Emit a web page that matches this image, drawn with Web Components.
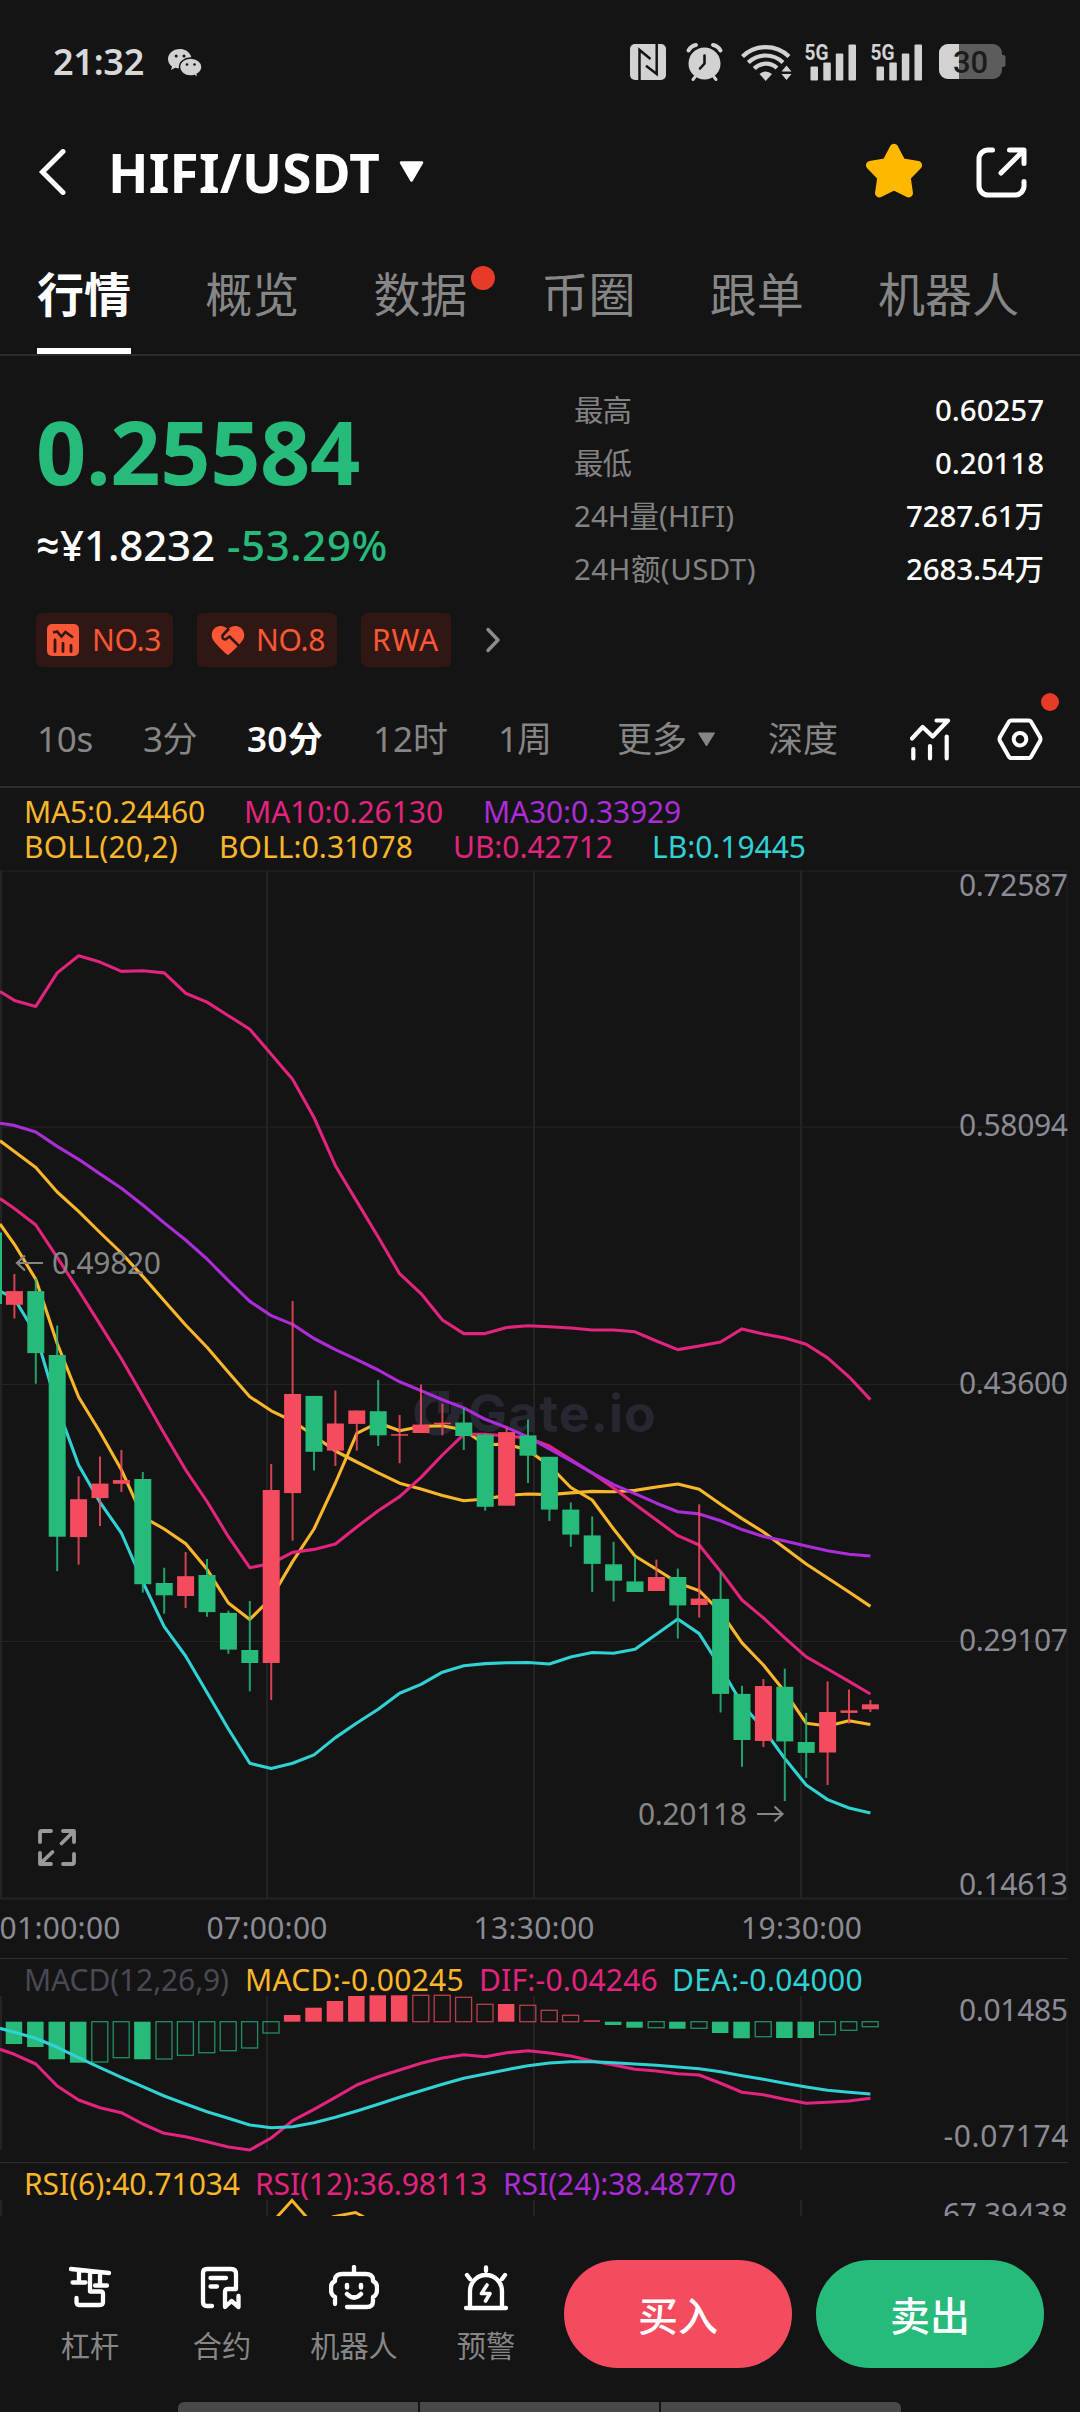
<!DOCTYPE html>
<html lang="zh-CN">
<head>
<meta charset="utf-8">
<title>HIFI/USDT</title>
<style>
  html, body { margin: 0; padding: 0; background: #141414; }
  body {
    width: 1080px;
    height: 2412px;
    overflow: hidden;
    display: flex;
    flex-direction: column;
    color: #fff;
    font-family: "Noto Sans", "Noto Sans CJK SC", sans-serif;
  }
</style>
</head>
<body>
  <status-bar></status-bar>
  <pair-header>HIFI/USDT</pair-header>
  <tab-bar>
    <tab-item active>行情</tab-item>
    <tab-item>概览</tab-item>
    <tab-item dot>数据</tab-item>
    <tab-item>币圈</tab-item>
    <tab-item>跟单</tab-item>
    <tab-item>机器人</tab-item>
  </tab-bar>
  <price-summary>
    <stat-row slot="stats" label="最高" label-width="58" value-width="110">0.60257</stat-row>
    <stat-row slot="stats" label="最低" label-width="58" value-width="110">0.20118</stat-row>
    <stat-row slot="stats" label="24H量(HIFI)" label-width="161" value-width="139">7287.61万</stat-row>
    <stat-row slot="stats" label="24H额(USDT)" label-width="183" value-width="139">2683.54万</stat-row>
  </price-summary>
  <interval-bar></interval-bar>
  <price-chart></price-chart>
  <macd-chart></macd-chart>
  <rsi-chart></rsi-chart>
  <action-bar></action-bar>

<script>
const GREEN = '#26ba7b';
const RED = '#f44b5f';
const YELLOW = '#fab62a';
const PINK = '#e2247f';
const PURPLE = '#ac2cd8';
const CYAN = '#30d2d4';

const GRID_X = [1, 267, 534, 801];
const RIGHT = 1067;
const STEP = 21.4;
const FIRST = 14.4;
const candleX = i => FIRST + i * STEP;

// Series start at the left screen edge, then one point per candle
function linePath(values) {
  return values
    .map((y, n) => `${n ? 'L' : 'M'}${n ? candleX(n - 1).toFixed(1) : 0} ${y}`)
    .join('');
}

function series(values, color) {
  return `<path d="${linePath(values)}" fill="none" stroke="${color}" stroke-width="3.100" stroke-linejoin="round"/>`;
}

// y is the middle of the capitals
function axisText(text, x, y, width, color = '#8b8b95') {
  return `<text x="${x}" y="${y + 10.8}" textLength="${width}" fill="${color}">${text}</text>`;
}

const SVG_CSS = `
  svg { display: block; overflow: visible; }
  text { font-size: 30px; }
`;

class StatusBar extends HTMLElement {
  connectedCallback() {
    this.attachShadow({ mode: 'open' }).innerHTML = `
      <style>
        :host { display: flex; align-items: center; height: 124px; box-sizing: border-box; padding: 0 75px 0 53px; flex: none; }
        svg { display: block; flex: none; overflow: visible; }
        .time { font-size: 36px; line-height: 40px; font-weight: 600; color: #d8d8d8; }
        .chat { margin: 2px auto 0 23px; }
        .nfc { margin-right: 20px; }
        .alarm { margin-right: 18px; }
        .wifi { margin-right: 14px; }
        .cell { margin-right: 13px; }
        .cell + .cell { margin-right: 15px; }
        text { font-family: "Roboto", sans-serif; }
      </style>
      <fit-text class="time" width="92">21:32</fit-text>
      <svg class="chat" width="35" height="29" viewBox="0 0 35 29" fill="#d2d2d2">
        <path d="M12 0C5 0 0 4.600 0 10c0 3.200 1.600 5.600 4 7.400L3 21l4.300-2.200c1.500.4 3 .7 4.700.6C23 19 25 11 22.500 6 20.500 2.200 16.500 0 12 0z"/>
        <path d="M22.500 9C16 9 11.500 13.200 11.500 18s4.500 9 11 9c1.400 0 2.600-.2 3.800-.6L30 28.500l-.8-3.300c2.600-1.600 4.800-4.200 4.800-7.200C34 13.200 29 9 22.500 9z" stroke="#141414" stroke-width="1.400"/>
        <g fill="#141414"><circle cx="8.200" cy="7" r="1.500"/><circle cx="16" cy="7" r="1.500"/><circle cx="19" cy="15.500" r="1.300"/><circle cx="26.500" cy="15.500" r="1.300"/></g>
      </svg>
      <svg class="nfc" width="36" height="36" viewBox="0 0 36 36">
        <rect width="36" height="36" rx="5" fill="#d2d2d2"/>
        <path d="M9.500 36V6L20.500 15M26.700 0V30L16 21.700" fill="none" stroke="#141414" stroke-width="2.500"/>
      </svg>
      <svg class="alarm" width="37" height="38" viewBox="0 0 37 38">
        <g fill="none" stroke="#d2d2d2" stroke-width="4" stroke-linecap="round">
          <path d="M2.500 7.500Q5 3 10 2M34.500 7.500Q32 3 27 2"/>
          <path d="M9 34L7 36.500M28 34L30 36.500" stroke-width="3"/>
        </g>
        <circle cx="18.500" cy="20.500" r="16" fill="#d2d2d2"/>
        <path d="M18.500 12.500V20.500L14 25.500" fill="none" stroke="#141414" stroke-width="2.600" stroke-linecap="round"/>
      </svg>
      <svg class="wifi" width="50" height="37" viewBox="0 0 50 37">
        <g fill="none" stroke="#d2d2d2" stroke-width="4.200">
          <path d="M1.500 12.500A33.500 33.500 0 0 1 48 12.500"/>
          <path d="M7.300 18.500A25 25 0 0 1 42 18.500"/>
          <path d="M13.200 24.500A16.500 16.500 0 0 1 36 24"/>
        </g>
        <path d="M24.700 37L18.500 30Q24.700 25 31 30z" fill="#d2d2d2"/>
        <path d="M40.500 27.500L45.500 21.500 50.500 27.500zM40.500 30L45.500 36 50.500 30z" fill="#d2d2d2"/>
      </svg>
      ${[0, 1].map(() => `
      <svg class="cell" width="53" height="38" viewBox="0 0 53 38" fill="#d2d2d2">
        <text x="-0.500" y="16.500" font-size="22" font-weight="700" textLength="24" lengthAdjust="spacingAndGlyphs">5G</text>
        <rect x="5.500" y="23.500" width="7.500" height="14" rx="1"/><rect x="18.300" y="19.500" width="7.500" height="18" rx="1"/>
        <rect x="30.800" y="10.500" width="7.500" height="27" rx="1"/><rect x="43.500" y="1.500" width="7.500" height="36" rx="1"/>
      </svg>`).join('')}
      <svg width="66" height="36" viewBox="0 0 66 36">
        <rect width="63" height="35" rx="9" fill="#5c5c5c"/>
        <path d="M63 11h1.500a2 2 0 0 1 2 2v8a2 2 0 0 1-2 2H63z" fill="#5c5c5c"/>
        <path d="M9 0H20V35H9A9 9 0 0 1 0 26V9A9 9 0 0 1 9 0z" fill="#d2d2d2"/>
        <text x="14" y="28.500" font-size="31" font-weight="500" textLength="35" fill="#1c1c1c">30</text>
      </svg>
    `;
  }
}

class PairHeader extends HTMLElement {
  connectedCallback() {
    this.attachShadow({ mode: 'open' }).innerHTML = `
      <style>
        :host { display: flex; align-items: center; height: 100px; padding: 0 53px 4px 38px; flex: none; box-sizing: border-box; }
        svg { display: block; flex: none; }
        .pair { margin: 1px 18px 0 41px; font-size: 53px; line-height: 60px; font-weight: 700; }
        .star { margin: -2px 53px 0 auto; }
      </style>
      <svg width="29" height="46" viewBox="0 0 29 46"><path d="M25 2.500L4.500 23 25 43.500" fill="none" stroke="#fff" stroke-width="5" stroke-linecap="round"/></svg>
      <fit-text class="pair" width="273"><slot></slot></fit-text>
      <svg width="25" height="22" viewBox="0 0 25 22"><path d="M2 1.500H23L12.500 19.500z" fill="#fff" stroke="#fff" stroke-width="2.500" stroke-linejoin="round"/></svg>
      <svg class="star" width="58" height="56" viewBox="0 0 58 56">
        <path d="M29 5 36.600 19.500 52.800 22.300 41.400 34 43.700 50.200 29 43 14.300 50.200 16.600 34 5.200 22.300 21.400 19.500z" fill="#ffb800" stroke="#ffb800" stroke-width="8.500" stroke-linejoin="round"/>
      </svg>
      <svg width="51" height="51" viewBox="0 0 51 51" fill="none" stroke="#fff" stroke-width="5" stroke-linecap="round" stroke-linejoin="round">
        <path d="M16.500 3H12A9 9 0 0 0 3 12V39A9 9 0 0 0 12 48H39A9 9 0 0 0 48 39V34.500"/>
        <path d="M33.500 3H48V16.500M47 4L25 26"/>
      </svg>
    `;
  }
}

class TabBar extends HTMLElement {
  connectedCallback() {
    this.attachShadow({ mode: 'open' }).innerHTML = `
      <style>
        :host {
          display: flex;
          justify-content: space-between;
          height: 132px;
          padding: 0 61px 0 37px;
          box-sizing: border-box;
          border-bottom: 2px solid #2b2b2b;
          flex: none;
        }
      </style>
      <slot></slot>
    `;
  }
}

class TabItem extends HTMLElement {
  connectedCallback() {
    const active = this.hasAttribute('active');
    this.attachShadow({ mode: 'open' }).innerHTML = `
      <style>
        :host {
          display: block;
          position: relative;
          padding-top: 38px;
          box-sizing: border-box;
          font-size: 47px;
          line-height: 60px;
          font-family: "Noto Sans CJK SC", sans-serif;
          color: ${active ? '#fff' : '#868686'};
          font-weight: ${active ? 700 : 400};
          ${active ? 'border-bottom: 6px solid #fff;' : ''}
        }
        i { position: absolute; left: 98px; top: 42px; width: 24px; height: 24px; border-radius: 50%; background: #e83a28; }
      </style>
      <slot></slot>${this.hasAttribute('dot') ? '<i></i>' : ''}
    `;
  }
}

class StatRow extends HTMLElement {
  connectedCallback() {
    this.attachShadow({ mode: 'open' }).innerHTML = `
      <style>
        :host { display: flex; justify-content: space-between; font-size: 29.500px; line-height: 53px; }
        .label { color: #828282; }
        .value { font-weight: 500; text-align: right; }
      </style>
      <fit-text class="label" width="${this.getAttribute('label-width')}">${this.getAttribute('label')}</fit-text>
      <fit-text class="value" width="${this.getAttribute('value-width')}"><slot></slot></fit-text>
    `;
  }
}

class TagChip extends HTMLElement {
  connectedCallback() {
    this.attachShadow({ mode: 'open' }).innerHTML = `
      <style>
        :host {
          display: flex;
          align-items: center;
          justify-content: space-between;
          height: 54px;
          padding: 0 11px;
          box-sizing: border-box;
          border-radius: 6px;
          background: #311713;
          color: #f95735;
          font-size: 30px;
          line-height: 54px;
        }
      </style>
      <slot name="icon"></slot>
      <fit-text width="${this.getAttribute('text-width')}"><slot></slot></fit-text>
    `;
  }
}

class PriceSummary extends HTMLElement {
  connectedCallback() {
    this.attachShadow({ mode: 'open' }).innerHTML = `
      <style>
        :host { display: grid; grid-template-columns: 536px 1fr; height: 324px; padding: 0 36px 0 36px; box-sizing: border-box; flex: none; }
        .left { padding-top: 51px; }
        .price { display: block; font-size: 88px; line-height: 88px; font-weight: 700; color: ${GREEN}; }
        .sub { display: flex; margin: 25px 0 43px; font-size: 42px; line-height: 50px; font-weight: 500; }
        .approx { font-family: "Roboto", sans-serif; }
        .change { color: ${GREEN}; margin-left: 11px; }
        .tags { display: flex; align-items: center; gap: 24px; }
        .tags svg { display: block; }
        .more { margin-left: 9px; }
        .stats { padding: 27px 0 0 2px; }
      </style>
      <div class="left">
        <fit-text class="price" width="325">0.25584</fit-text>
        <div class="sub">
          <fit-text class="approx" width="24">≈</fit-text>
          <fit-text class="fiat" width="156">¥1.8232</fit-text>
          <fit-text class="change" width="162">-53.29%</fit-text>
        </div>
        <div class="tags">
          <tag-chip text-width="70" style="width: 137px">
            <svg slot="icon" width="32" height="32" viewBox="0 0 32 32">
              <rect width="32" height="32" rx="5" fill="#f95735"/>
              <path d="M6 8.500L10 7.500 14.500 12.500 18.500 8 26 13.500" fill="none" stroke="#311713" stroke-width="2.600"/>
              <path d="M8 16V27.500M16 19.500V27.500M24 21.500V27.500" stroke="#311713" stroke-width="2.800" stroke-linecap="round"/>
            </svg>NO.3</tag-chip>
          <tag-chip text-width="70" style="width: 140px; padding-left: 14px">
            <svg slot="icon" width="34" height="31" viewBox="0 0 34 31">
              <path d="M17 30C15 29 3 18 1.200 13 -.5 7 3 1.500 9 1c4-.2 6 1.500 8 3 2-1.500 4-3.200 8-3 6 .5 9.500 6 7.800 12C31 18 19 29 17 30z" fill="#f95735"/>
              <path d="M18 3.500L11.500 10.500Q10.500 14 14.500 14.500L18.500 11.500 28 21" fill="none" stroke="#311713" stroke-width="2.600" stroke-linejoin="round"/>
            </svg>NO.8</tag-chip>
          <tag-chip text-width="68" style="width: 90px">RWA</tag-chip>
          <svg class="more" width="18" height="28" viewBox="0 0 18 28"><path d="M4 3.500L14 14 4 24.500" fill="none" stroke="#8c8c8c" stroke-width="3.500" stroke-linecap="round" stroke-linejoin="round"/></svg>
        </div>
      </div>
      <div class="stats"><slot name="stats"></slot></div>
    `;
  }
}

class IntervalBar extends HTMLElement {
  connectedCallback() {
    this.attachShadow({ mode: 'open' }).innerHTML = `
      <style>
        :host {
          display: flex;
          align-items: center;
          gap: 49px;
          height: 108px;
          padding: 12px 37px 0 37px;
          box-sizing: border-box;
          border-bottom: 2px solid #2e2e2e;
          font-size: 35px;
          line-height: 48px;
          color: #868686;
          flex: none;
        }
        svg { display: block; }
        .active { color: #fff; font-weight: 600; }
        .more { display: flex; align-items: center; gap: 9px; margin-left: 16px; }
        .depth { margin-left: 3px; }
        .tools { display: flex; gap: 46px; margin-left: auto; position: relative; }
        .tools i { position: absolute; right: -16px; top: -25px; width: 18px; height: 18px; border-radius: 50%; background: #e83a28; }
      </style>
      <fit-text width="57">10s</fit-text>
      <fit-text width="55">3分</fit-text>
      <fit-text class="active" width="77">30分</fit-text>
      <fit-text width="76">12时</fit-text>
      <fit-text width="54">1周</fit-text>
      <div class="more">
        <fit-text width="71">更多</fit-text>
        <svg width="19" height="15" viewBox="0 0 19 15"><path d="M1.500 1H17.500L9.500 14z" fill="#868686" stroke="#868686" stroke-linejoin="round"/></svg>
      </div>
      <fit-text class="depth" width="71">深度</fit-text>
      <div class="tools">
        <svg width="41" height="43" viewBox="0 0 41 43" fill="none" stroke="#fff" stroke-width="4.200" stroke-linecap="round" stroke-linejoin="round">
          <path d="M2 20.500L12.700 9 22.700 18.500 38 2.500H26.500"/>
          <path d="M3.300 31V40.500M20 28V40.500M36.700 18.500V40.500"/>
        </svg>
        <svg width="46" height="43" viewBox="0 0 46 43" fill="none" stroke="#fff" stroke-width="4">
          <path d="M14.500 2.500H31.500Q33.500 2.500 34.500 4.500L43 19Q44 21 43 23L34.500 38Q33.500 40 31.500 40H14.500Q12.500 40 11.500 38L3 23Q2 21 3 19L11.500 4.500Q12.500 2.500 14.500 2.500z"/>
          <circle cx="23" cy="21.200" r="6.300"/>
        </svg>
        <i></i>
      </div>
    `;
  }
}

// A row of indicator values: "text|width|color|gap before"
class LegendRow extends HTMLElement {
  connectedCallback() {
    this.attachShadow({ mode: 'open' }).innerHTML = `
      <style>
        :host { display: flex; padding-left: 24px; font-size: 30px; line-height: 34px; white-space: nowrap; }
      </style>
      ${this.getAttribute('items').split(';').map(item => {
        const [text, width, color, gap] = item.split('|');
        return `<fit-text width="${width}" style="color: ${color}; margin-left: ${gap || 0}px">${text}</fit-text>`;
      }).join('')}
    `;
  }
}

// [up, high, top, bottom, low]
const CANDLES = [
  [1, 1273.9, 1291.1, 1304.8, 1318.6], [0, 1278.4, 1291.1, 1353.1, 1383.7], [0, 1325.5, 1355, 1536.7, 1571.2],
  [1, 1476.3, 1499.2, 1537.1, 1564.7], [1, 1456.4, 1483.6, 1498.1, 1526], [1, 1449.9, 1480.1, 1483.8, 1492],
  [0, 1472, 1479, 1584.2, 1592.6], [0, 1567.7, 1583, 1595.3, 1613.7], [1, 1552, 1576.2, 1596, 1607.9],
  [0, 1558.9, 1575, 1612.1, 1616.7], [0, 1610.6, 1612.9, 1649.6, 1653.8], [0, 1601, 1650, 1663, 1691.3],
  [1, 1464, 1490, 1663, 1700], [1, 1301, 1394, 1493.1, 1540.6], [0, 1395.9, 1395.9, 1451.8, 1470.5],
  [1, 1390.6, 1423.5, 1450.6, 1466], [1, 1410.5, 1410.5, 1423.9, 1450.6], [0, 1379.9, 1411.2, 1435.3, 1446],
  [1, 1415, 1434.2, 1435.7, 1463.3], [1, 1384.4, 1424.6, 1433, 1433], [1, 1403.6, 1422.7, 1424.2, 1435.3],
  [0, 1407.9, 1422.5, 1436, 1450], [0, 1433.6, 1434.6, 1506.8, 1510.7], [1, 1427.5, 1432.1, 1505.7, 1505.7],
  [0, 1419.6, 1435.4, 1455.7, 1482.9], [0, 1456.8, 1456.8, 1509.6, 1521], [0, 1502.5, 1509.6, 1534.6, 1546.8],
  [0, 1516.4, 1535.4, 1563.9, 1592], [0, 1541.8, 1564.3, 1580.7, 1601.4], [0, 1556.8, 1581.4, 1592, 1592],
  [1, 1559.6, 1577, 1591, 1591], [0, 1568.6, 1577, 1605.4, 1638.6], [1, 1504.3, 1598.6, 1605, 1617.5],
  [0, 1572, 1598.9, 1693.9, 1712.5], [0, 1685.7, 1693.9, 1740, 1766.8], [1, 1679, 1686, 1741, 1747],
  [0, 1668.6, 1686.8, 1741.4, 1801], [0, 1712.9, 1742, 1752.9, 1777.9], [1, 1681.4, 1712, 1752.5, 1785],
  [1, 1689.6, 1710.4, 1712.9, 1723.6], [1, 1700, 1704.3, 1709.3, 1712]
];

const UB = [991.5, 1000.4, 1006.4, 972.9, 955.7, 962.1, 971.4, 970.7, 972.9, 993.2, 1002.1, 1015.7, 1029.3, 1054.3,
  1079.3, 1117.5, 1165.7, 1201.4, 1237, 1273.6, 1293.6, 1320, 1333.6, 1333.6, 1327.5, 1325.7, 1326.8, 1328, 1330, 1330,
  1331.8, 1341, 1349.6, 1346, 1342, 1328.9, 1333.9, 1338, 1344.3, 1357.9, 1376.8, 1399.6];
const MA30 = [1123.2, 1125.4, 1132, 1146.4, 1159.3, 1173.9, 1188.2, 1205, 1222.9, 1240, 1259, 1280.7, 1301.4, 1315.6,
  1324.4, 1338.5, 1349.6, 1359.6, 1370, 1381.8, 1390.6, 1399.7, 1407.9, 1419.3, 1427.5, 1437, 1449, 1460.7, 1472.9,
  1484.6, 1493.6, 1503.2, 1511.8, 1513.9, 1520.7, 1529.6, 1536.4, 1541, 1546, 1550.7, 1554.3, 1556];
const BOLL = [1140.7, 1151.4, 1167.5, 1192, 1211.4, 1232.5, 1253, 1276.4, 1300.7, 1325, 1347.3, 1372.2, 1396.7, 1410.8,
  1421, 1435.7, 1451, 1462, 1472.8, 1483.2, 1489, 1495.4, 1500.7, 1499, 1495.4, 1494, 1494.6, 1492.9, 1491.4, 1491.8,
  1490.4, 1487, 1484, 1489.3, 1504.3, 1518.6, 1532, 1548, 1564, 1578, 1592, 1606.4];
const MA10 = [1198.6, 1208.6, 1225, 1257.4, 1290.3, 1324.4, 1358.8, 1396, 1433.4, 1469.8, 1501.5, 1536.7, 1567.7, 1563.5,
  1552.4, 1549.4, 1544, 1527, 1510.7, 1496.6, 1477.4, 1455, 1434.3, 1434.3, 1436, 1438, 1446, 1459.6, 1473, 1488,
  1504.3, 1520, 1535.7, 1545, 1571.4, 1600, 1617.9, 1637.9, 1656.8, 1669, 1681.4, 1694];
const MA5 = [1224, 1244.3, 1279.3, 1343.5, 1397, 1432, 1469.8, 1516.8, 1529, 1543.6, 1569.3, 1603, 1619.4, 1598, 1561.6,
  1529, 1483, 1433.4, 1422.7, 1430.7, 1426.5, 1425.8, 1430, 1444.6, 1444.3, 1450, 1465.7, 1487.5, 1500, 1529, 1556,
  1569.3, 1582.9, 1590.7, 1612, 1642.9, 1665, 1691.8, 1723.2, 1726, 1720.7, 1724.6];
const LB = [1291, 1298.7, 1334, 1406.6, 1465, 1502.3, 1533, 1582, 1626.7, 1656, 1692.5, 1729, 1763.3, 1768.6, 1763.3,
  1754.9, 1737.6, 1723, 1709.3, 1693.2, 1684.4, 1672.2, 1665.7, 1663.6, 1662.8, 1662.5, 1664, 1657, 1652.5, 1653.2,
  1649.3, 1634.3, 1619, 1633.6, 1667.5, 1704, 1729, 1758.6, 1785, 1799.6, 1808, 1813];

class PriceChart extends HTMLElement {
  connectedCallback() {
    this.attachShadow({ mode: 'open' }).innerHTML = `
      <style>
        ${SVG_CSS}
        :host { display: block; flex: none; height: 1170px; }
        .legend { height: 82px; padding-top: 7px; box-sizing: border-box; }
        legend-row + legend-row { margin-top: 1px; }
        .mark { font-family: "Inter", sans-serif; font-size: 52px; font-weight: 700; }
      </style>
      <div class="legend">
        <legend-row items="MA5:0.24460|182|${YELLOW};MA10:0.26130|200|${PINK}|38;MA30:0.33929|199|${PURPLE}|39"></legend-row>
        <legend-row items="BOLL(20,2)|155|${YELLOW};BOLL:0.31078|195|${YELLOW}|40;UB:0.42712|161|${PINK}|39;LB:0.19445|155|${CYAN}|38"></legend-row>
      </div>
      <svg width="1080" height="1088" viewBox="0 870 1080 1088">
        ${this.renderGrid()}
        <g fill="#272731">
          <path d="M437 1396A17 17 0 1 0 454 1414" fill="none" stroke="#272731" stroke-width="11"/>
          <rect x="438" y="1391" width="11" height="22"/><rect x="451" y="1402" width="12" height="12"/>
          <text class="mark" x="468" y="1432" textLength="188">Gate.io</text>
        </g>
        ${series(UB, PINK)}
        ${series(LB, CYAN)}
        ${series(BOLL, YELLOW)}
        ${series(MA5, YELLOW)}
        ${series(MA10, PINK)}
        ${series(MA30, PURPLE)}
        <rect x="0" y="1232.500" width="2" height="71.500" fill="${GREEN}"/>
        ${CANDLES.map((c, i) => this.renderCandle(c, i)).join('')}
        ${axisText('0.72587', 959, 885.2, 109)}
        ${axisText('0.58094', 959, 1125.4, 109)}
        ${axisText('0.43600', 959, 1383, 109)}
        ${axisText('0.29107', 959, 1640.5, 109)}
        ${axisText('0.14613', 959, 1884, 109)}
        ${axisText('01:00:00', -0.5, 1928, 121)}
        ${axisText('07:00:00', 206.5, 1928, 121)}
        ${axisText('13:30:00', 473.5, 1928, 121)}
        ${axisText('19:30:00', 741, 1928, 121)}
        ${axisText('0.49820', 52, 1263, 109, '#868686')}
        ${axisText('0.20118', 638, 1814, 109, '#868686')}
        <g fill="none" stroke="#868686" stroke-width="2.200">
          <path d="M43 1263H17.500M25 1255.500L17 1263L25 1270.500"/>
          <path d="M757 1814H782M774.500 1806.500L782.500 1814L774.500 1821.500"/>
        </g>
        <g fill="none" stroke="#999" stroke-width="3.800" stroke-linecap="round" stroke-linejoin="round">
          <path d="M51 1831H42Q40 1831 40 1833V1842M63 1831H74V1842M73 1832L61.500 1843.500"/>
          <path d="M74 1854V1862Q74 1864 72 1864H63M40 1853V1864H51M41 1863L52.500 1852"/>
        </g>
      </svg>
    `;
  }

  renderGrid() {
    const h = [871, 1127, 1384.5, 1641.5].map(y => `<path d="M0 ${y}H${RIGHT}" stroke="#242424"/>`).join('');
    const v = GRID_X.map(x => `<path d="M${x} 870V1898" stroke="#232323" stroke-width="2"/>`).join('');
    return `${h}${v}<path d="M${RIGHT} 870V1898" stroke="#212121"/>
      <path d="M0 1898.500H${RIGHT}" stroke="#242424" stroke-width="2"/>`;
  }

  renderCandle([up, high, top, bottom, low], i) {
    const x = candleX(i);
    const color = up ? RED : GREEN;
    return `<path d="M${x} ${high}V${low}" stroke="${color}" stroke-width="2" opacity="0.85"/>
      <rect x="${x - 8.5}" y="${top}" width="17" height="${Math.max(1.5, bottom - top)}" fill="${color}"/>`;
  }
}

// [end of bar, hollow]
const ZERO = 2021.7;
const BARS = [
  [2044, 0], [2047, 0], [2059.3, 0], [2062.7, 0], [2062, 1], [2057.7, 1], [2059.3, 0], [2059, 1], [2055.3, 1],
  [2052.7, 1], [2050.7, 1], [2048, 1], [2033, 1], [2015, 0], [2007.7, 0], [2001, 0], [1996, 0], [1995.3, 0],
  [1995.3, 0], [1995.3, 1], [1995.3, 1], [1997.3, 1], [2004.3, 1], [2004, 0], [2005.3, 1], [2010.3, 1],
  [2015.3, 1], [2020.4, 0], [2025, 0], [2027.7, 0], [2027.7, 1], [2028.7, 0], [2028.3, 1], [2033, 0], [2038.3, 0],
  [2036.7, 1], [2038, 0], [2038, 0], [2034.7, 1], [2030.3, 1], [2026.7, 1]
];
const DIF = [2049.3, 2054.3, 2064, 2086, 2100, 2107.7, 2112.7, 2124, 2133.3, 2136.7, 2141.7, 2147, 2150, 2138, 2120.7,
  2109.3, 2097.3, 2085, 2076.7, 2070, 2063.3, 2058, 2054.7, 2056.7, 2052.7, 2050.7, 2053, 2056, 2061, 2065, 2069.3,
  2071, 2073.7, 2075, 2083.3, 2092.3, 2094.7, 2099.3, 2103.3, 2102.3, 2101, 2098.3];
const DEA = [2028.3, 2032.3, 2038.3, 2047.3, 2057.7, 2067.7, 2077.3, 2086.7, 2096, 2104, 2111.7, 2118.3, 2125, 2127.7,
  2126.7, 2122.7, 2117.3, 2111, 2104.3, 2097.3, 2090.7, 2084.3, 2078.3, 2074, 2069.7, 2065.7, 2063, 2061.7, 2061.7,
  2062.7, 2064, 2065.3, 2067, 2068.7, 2071.7, 2075.7, 2079.3, 2083.3, 2087, 2090.3, 2092.3, 2094];

class MacdChart extends HTMLElement {
  connectedCallback() {
    this.attachShadow({ mode: 'open' }).innerHTML = `
      <style>
        ${SVG_CSS}
        :host { display: block; flex: none; width: 1068px; height: 204px; box-sizing: border-box; border-top: 1px solid #303030; }
        .legend { padding-top: 4px; height: 36px; box-sizing: border-box; }
      </style>
      <div class="legend">
        <legend-row items="MACD(12,26,9)|206|#494953;MACD:-0.00245|220|${YELLOW}|15;DIF:-0.04246|180|${PINK}|14;DEA:-0.04000|192|${CYAN}|13"></legend-row>
      </div>
      <svg width="1068" height="167" viewBox="0 1995 1068 167">
        ${GRID_X.map(x => `<path d="M${x} 1996V2150" stroke="#232323" stroke-width="2"/>`).join('')}
        <path d="M${RIGHT} 1996V2150" stroke="#212121"/>
        ${BARS.map((b, i) => this.renderBar(b, i)).join('')}
        ${series(DIF, PINK)}
        ${series(DEA, CYAN)}
        ${axisText('0.01485', 959, 2010.5, 109)}
        ${axisText('-0.07174', 943.5, 2136, 125)}
      </svg>
    `;
  }

  renderBar([end, hollow], i) {
    const x = candleX(i) - 8.7;
    const color = end > ZERO ? GREEN : RED;
    const top = Math.min(end, ZERO);
    const height = Math.abs(end - ZERO);
    return hollow
      ? `<rect x="${x + 0.5}" y="${top}" width="16" height="${height}" fill="none" stroke="${color}" stroke-width="1.300" opacity="0.75"/>`
      : `<rect x="${x}" y="${top}" width="16.500" height="${height}" fill="${color}"/>`;
  }
}

class RsiChart extends HTMLElement {
  connectedCallback() {
    this.attachShadow({ mode: 'open' }).innerHTML = `
      <style>
        ${SVG_CSS}
        :host { display: block; flex: none; width: 1068px; height: 54px; box-sizing: border-box; border-top: 1px solid #303030; overflow: hidden; }
        .legend { padding-top: 4px; height: 37px; box-sizing: border-box; }
      </style>
      <div class="legend">
        <legend-row items="RSI(6):40.71034|217|${YELLOW};RSI(12):36.98113|233|${PINK}|14;RSI(24):38.48770|234|${PURPLE}|15"></legend-row>
      </div>
      <svg width="1068" height="16" viewBox="0 2200 1068 16">
        ${GRID_X.map(x => `<path d="M${x} 2200V2216" stroke="#232323" stroke-width="2"/>`).join('')}
        <path d="M277 2217L292 2200.500L306.500 2217M332 2217L355.500 2212.500L364 2217" fill="none" stroke="${YELLOW}" stroke-width="2.900"/>
        ${axisText('67.39438', 943, 2214, 125)}
      </svg>
    `;
  }
}

class NavItem extends HTMLElement {
  connectedCallback() {
    this.attachShadow({ mode: 'open' }).innerHTML = `
      <style>
        :host {
          display: flex;
          flex-direction: column;
          align-items: center;
          justify-content: space-between;
          width: 132px;
          height: 99px;
          font-family: "Noto Sans CJK SC", sans-serif;
          font-size: 29.200px;
          line-height: 40px;
          color: #868686;
        }
        svg { display: block; fill: none; stroke: #fff; stroke-width: 4.300; stroke-linecap: round; stroke-linejoin: round; }
      </style>
      <svg width="50" height="46" viewBox="0 0 50 46">${NavItem.icons[this.getAttribute('icon')]}</svg>
      <span><slot></slot></span>
    `;
  }
}

NavItem.icons = {
  lever: `<path d="M6 4L44 8M14 6V16M7.500 17.500H20.500M35 8V19M30 20.500H42M25 7V26.500H35.500Q38 26.500 38 29V37Q38 40 35 40H14Q11.500 40 11.500 37V33"/>`,
  contract: `<path d="M15 41H10Q6 41 6 37V8Q6 4 10 4H34Q39 4 39 9V24H31Q28 24 28 27V42L34.500 36L41.500 42V31M13.500 13H29M13.500 21.500H20"/>`,
  robot: `<path d="M25 2V9M6 39V32Q2 30 2 25V22Q2 18 6 16V14Q7 9 13 9H37Q43 9 44 14V16Q48 18 48 22V25Q48 30 44 32V36Q44 42 38 42H18"/>
    <path d="M18 20V22.500M32 20V22.500M18 29Q25 36 32 29" stroke-width="4.500"/>`,
  alert: `<path d="M5 43H45M9 42V26A16 16 0 0 1 41 26V42M25 2.500V6M6 10L9 14M44 10L41 14"/>
    <path d="M26 20L20.500 28.500H29L24.500 36" stroke-width="3.600"/>`
};

class TradeButton extends HTMLElement {
  connectedCallback() {
    this.attachShadow({ mode: 'open' }).innerHTML = `
      <style>
        :host {
          display: flex;
          align-items: center;
          justify-content: center;
          width: 228px;
          height: 108px;
          border-radius: 54px;
          background: ${this.getAttribute('side') === 'buy' ? RED : GREEN};
          font-family: "Noto Sans CJK SC", sans-serif;
          font-size: 40px;
          line-height: 50px;
          font-weight: 500;
        }
      </style>
      <span><slot></slot></span>
    `;
  }
}

class ActionBar extends HTMLElement {
  connectedCallback() {
    this.attachShadow({ mode: 'open' }).innerHTML = `
      <style>
        :host { display: flex; flex-direction: column; justify-content: space-between; flex: none; height: 196px; background: #141414; }
        .row { display: flex; justify-content: space-between; padding: 44px 36px 0 24px; }
        nav { display: flex; padding-top: 5px; }
        .buttons { display: flex; gap: 24px; }
        .home { display: flex; gap: 2px; width: 723px; height: 10px; margin-left: 178px; border-radius: 6px 6px 0 0; overflow: hidden; }
        .home b { flex: 1; background: #484848; }
      </style>
      <div class="row">
        <nav>
          <nav-item icon="lever">杠杆</nav-item>
          <nav-item icon="contract">合约</nav-item>
          <nav-item icon="robot">机器人</nav-item>
          <nav-item icon="alert">预警</nav-item>
        </nav>
        <div class="buttons">
          <trade-button side="buy">买入</trade-button>
          <trade-button side="sell">卖出</trade-button>
        </div>
      </div>
      <div class="home"><b></b><b></b><b></b></div>
    `;
  }
}

// Spreads its text over a given width by letter spacing
class FitText extends HTMLElement {
  connectedCallback() {
    const width = parseFloat(this.getAttribute('width'));
    this.attachShadow({ mode: 'open' }).innerHTML = `
      <style>
        :host { display: block; width: ${width}px; white-space: nowrap; flex: none; }
        span { display: inline-block; }
      </style>
      <span><slot></slot></span>
    `;
    const span = this.shadowRoot.querySelector('span');
    const source = this.querySelector('slot') ? this.getRootNode().host : this;
    const length = source.textContent.trim().length;
    const natural = span.getBoundingClientRect().width;
    span.style.letterSpacing = `${(width - 1 - natural) / length}px`;
  }
}

customElements.define('status-bar', StatusBar);
customElements.define('pair-header', PairHeader);
customElements.define('tab-bar', TabBar);
customElements.define('tab-item', TabItem);
customElements.define('price-summary', PriceSummary);
customElements.define('stat-row', StatRow);
customElements.define('tag-chip', TagChip);
customElements.define('interval-bar', IntervalBar);
customElements.define('price-chart', PriceChart);
customElements.define('macd-chart', MacdChart);
customElements.define('rsi-chart', RsiChart);
customElements.define('legend-row', LegendRow);
customElements.define('action-bar', ActionBar);
customElements.define('nav-item', NavItem);
customElements.define('trade-button', TradeButton);
customElements.define('fit-text', FitText);
</script>
</body>
</html>
